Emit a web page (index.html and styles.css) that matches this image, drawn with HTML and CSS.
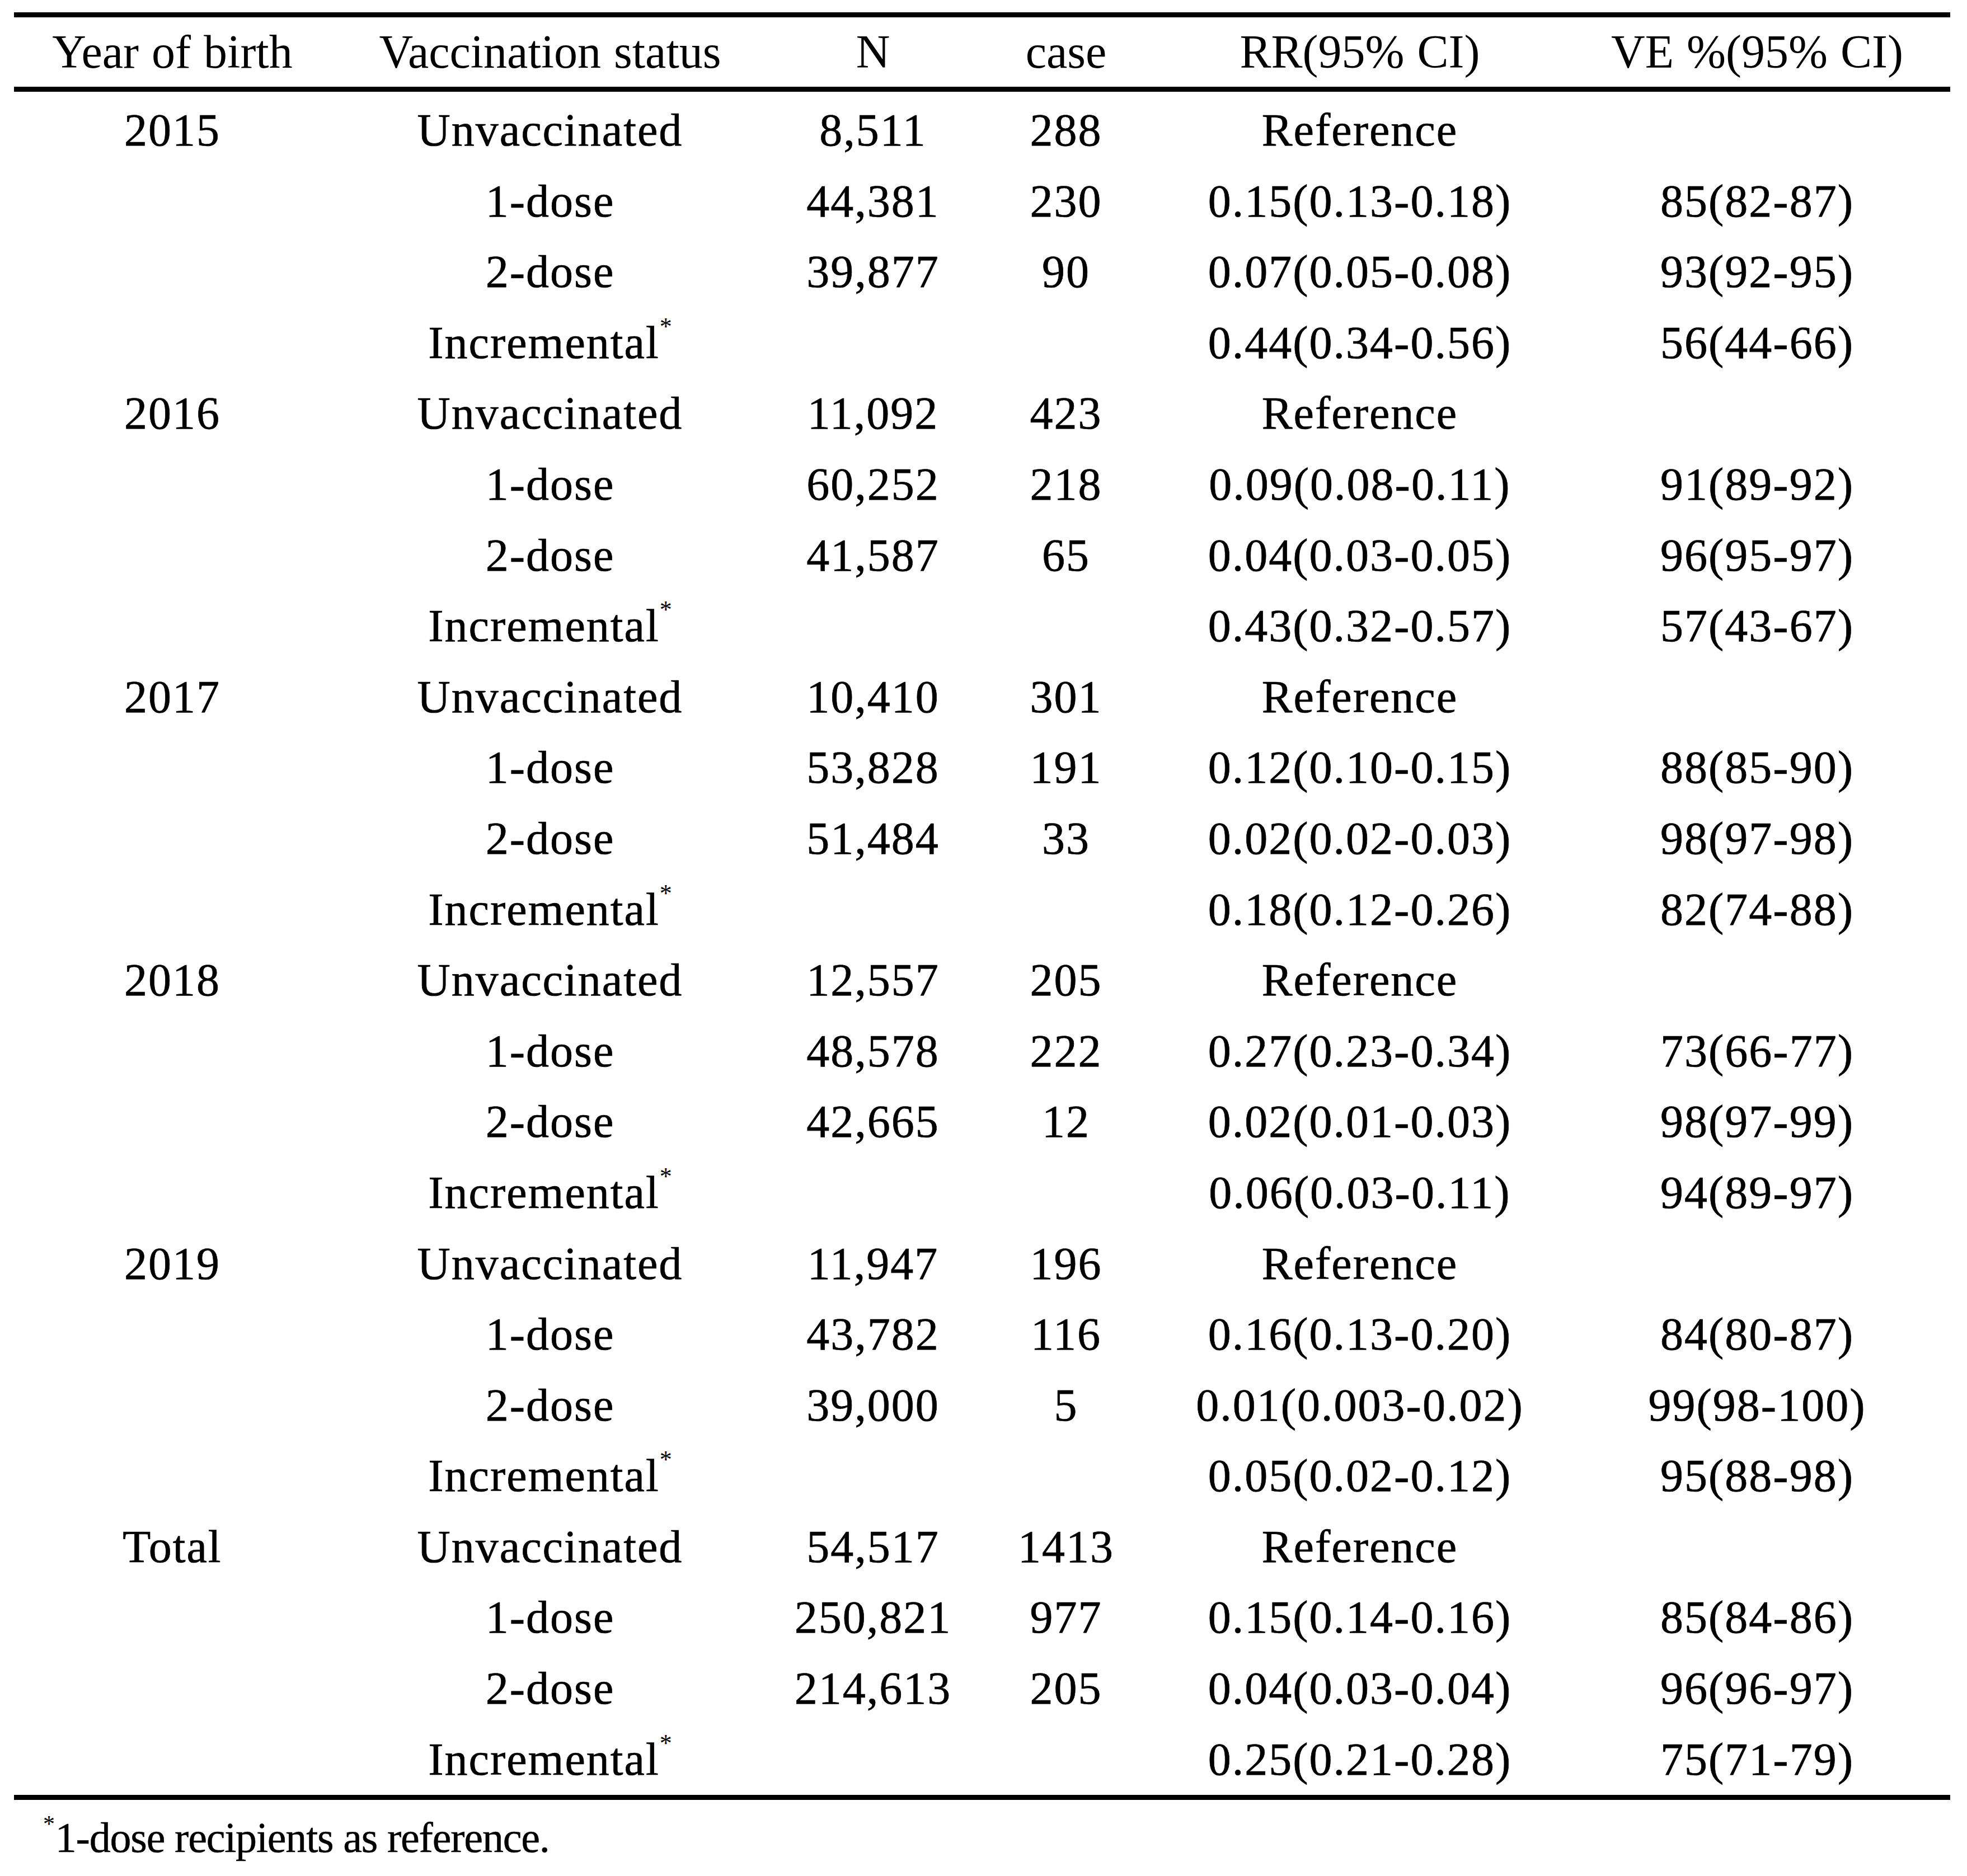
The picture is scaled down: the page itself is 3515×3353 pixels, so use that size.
FILE: index.html
```html
<!DOCTYPE html>
<html lang="en">
<head>
<meta charset="utf-8">
<title>Vaccine effectiveness by year of birth</title>
<link rel="stylesheet" href="styles.css">
</head>
<body>
<div class="page">
  <div class="tbl">
    <div class="row head">
      <div class="c">Year of birth</div>
      <div class="c">Vaccination status</div>
      <div class="c">N</div>
      <div class="c">case</div>
      <div class="c">RR(95% CI)</div>
      <div class="c">VE %(95% CI)</div>
    </div>
    <div class="tbody">
      <div class="row"><div class="c">2015</div><div class="c">Unvaccinated</div><div class="c">8,511</div><div class="c">288</div><div class="c">Reference</div><div class="c"></div></div>
      <div class="row"><div class="c"></div><div class="c">1-dose</div><div class="c">44,381</div><div class="c">230</div><div class="c">0.15(0.13-0.18)</div><div class="c">85(82-87)</div></div>
      <div class="row"><div class="c"></div><div class="c">2-dose</div><div class="c">39,877</div><div class="c">90</div><div class="c">0.07(0.05-0.08)</div><div class="c">93(92-95)</div></div>
      <div class="row"><div class="c"></div><div class="c">Incremental<sup>*</sup></div><div class="c"></div><div class="c"></div><div class="c">0.44(0.34-0.56)</div><div class="c">56(44-66)</div></div>

      <div class="row"><div class="c">2016</div><div class="c">Unvaccinated</div><div class="c">11,092</div><div class="c">423</div><div class="c">Reference</div><div class="c"></div></div>
      <div class="row"><div class="c"></div><div class="c">1-dose</div><div class="c">60,252</div><div class="c">218</div><div class="c">0.09(0.08-0.11)</div><div class="c">91(89-92)</div></div>
      <div class="row"><div class="c"></div><div class="c">2-dose</div><div class="c">41,587</div><div class="c">65</div><div class="c">0.04(0.03-0.05)</div><div class="c">96(95-97)</div></div>
      <div class="row"><div class="c"></div><div class="c">Incremental<sup>*</sup></div><div class="c"></div><div class="c"></div><div class="c">0.43(0.32-0.57)</div><div class="c">57(43-67)</div></div>

      <div class="row"><div class="c">2017</div><div class="c">Unvaccinated</div><div class="c">10,410</div><div class="c">301</div><div class="c">Reference</div><div class="c"></div></div>
      <div class="row"><div class="c"></div><div class="c">1-dose</div><div class="c">53,828</div><div class="c">191</div><div class="c">0.12(0.10-0.15)</div><div class="c">88(85-90)</div></div>
      <div class="row"><div class="c"></div><div class="c">2-dose</div><div class="c">51,484</div><div class="c">33</div><div class="c">0.02(0.02-0.03)</div><div class="c">98(97-98)</div></div>
      <div class="row"><div class="c"></div><div class="c">Incremental<sup>*</sup></div><div class="c"></div><div class="c"></div><div class="c">0.18(0.12-0.26)</div><div class="c">82(74-88)</div></div>

      <div class="row"><div class="c">2018</div><div class="c">Unvaccinated</div><div class="c">12,557</div><div class="c">205</div><div class="c">Reference</div><div class="c"></div></div>
      <div class="row"><div class="c"></div><div class="c">1-dose</div><div class="c">48,578</div><div class="c">222</div><div class="c">0.27(0.23-0.34)</div><div class="c">73(66-77)</div></div>
      <div class="row"><div class="c"></div><div class="c">2-dose</div><div class="c">42,665</div><div class="c">12</div><div class="c">0.02(0.01-0.03)</div><div class="c">98(97-99)</div></div>
      <div class="row"><div class="c"></div><div class="c">Incremental<sup>*</sup></div><div class="c"></div><div class="c"></div><div class="c">0.06(0.03-0.11)</div><div class="c">94(89-97)</div></div>

      <div class="row"><div class="c">2019</div><div class="c">Unvaccinated</div><div class="c">11,947</div><div class="c">196</div><div class="c">Reference</div><div class="c"></div></div>
      <div class="row"><div class="c"></div><div class="c">1-dose</div><div class="c">43,782</div><div class="c">116</div><div class="c">0.16(0.13-0.20)</div><div class="c">84(80-87)</div></div>
      <div class="row"><div class="c"></div><div class="c">2-dose</div><div class="c">39,000</div><div class="c">5</div><div class="c">0.01(0.003-0.02)</div><div class="c">99(98-100)</div></div>
      <div class="row"><div class="c"></div><div class="c">Incremental<sup>*</sup></div><div class="c"></div><div class="c"></div><div class="c">0.05(0.02-0.12)</div><div class="c">95(88-98)</div></div>

      <div class="row"><div class="c">Total</div><div class="c">Unvaccinated</div><div class="c">54,517</div><div class="c">1413</div><div class="c">Reference</div><div class="c"></div></div>
      <div class="row"><div class="c"></div><div class="c">1-dose</div><div class="c">250,821</div><div class="c">977</div><div class="c">0.15(0.14-0.16)</div><div class="c">85(84-86)</div></div>
      <div class="row"><div class="c"></div><div class="c">2-dose</div><div class="c">214,613</div><div class="c">205</div><div class="c">0.04(0.03-0.04)</div><div class="c">96(96-97)</div></div>
      <div class="row"><div class="c"></div><div class="c">Incremental<sup>*</sup></div><div class="c"></div><div class="c"></div><div class="c">0.25(0.21-0.28)</div><div class="c">75(71-79)</div></div>
    </div>
  </div>
  <p class="note"><sup>*</sup>1-dose recipients as reference.</p>
</div>
</body>
</html>
```

FILE: styles.css
```css
html, body {
  margin: 0;
  padding: 0;
  background: #ffffff;
}

body {
  font-family: "Liberation Serif", "Times New Roman", serif;
  color: #000000;
}

.page {
  padding: 22px 0 0 25px;
}

.tbl {
  width: 3460px;
}

.row {
  display: grid;
  grid-template-columns: 566px 784px 370px 320px 730px 690px;
}

.c {
  text-align: center;
  white-space: nowrap;
}

.head {
  border-top: 9px solid #000;
  border-bottom: 9px solid #000;
  height: 124px;
  font-size: 84px;
  line-height: 124px;
  word-spacing: 2px;
}

.tbody {
  padding-top: 6px;
  border-bottom: 9px solid #000;
}

.tbody .row {
  height: 126.6px;
  font-size: 82px;
  line-height: 126.6px;
  letter-spacing: 2px;
  -webkit-text-stroke: 0.7px #000;
}

.tbody sup {
  font-size: 44px;
  line-height: 0;
  vertical-align: 0;
  position: relative;
  top: -42px;
  letter-spacing: 0;
  -webkit-text-stroke: 0;
}

.note {
  margin: 17px 0 0 0;
  padding-left: 52px;
  font-size: 76px;
  line-height: 100px;
  letter-spacing: -1.2px;
  -webkit-text-stroke: 0.5px #000;
}

.note sup {
  font-size: 42px;
  line-height: 0;
  vertical-align: 0;
  position: relative;
  top: -36px;
  margin-right: 2px;
  -webkit-text-stroke: 0;
}
```
